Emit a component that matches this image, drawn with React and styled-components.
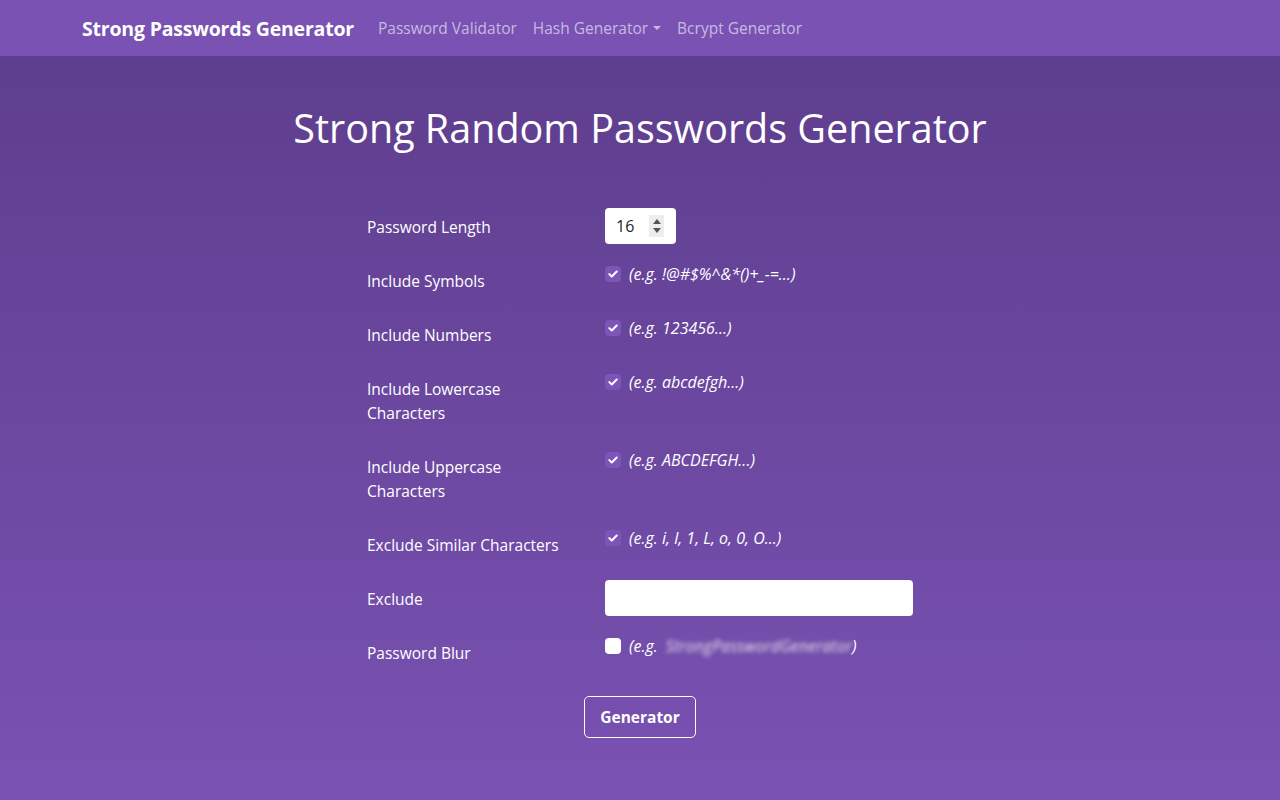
import React from "react";
import styled, { createGlobalStyle } from "styled-components";

const Global = createGlobalStyle`
  html, body { margin: 0; padding: 0; }
  body {
    font-family: "Open Sans", "Noto Sans", sans-serif;
    background: linear-gradient(180deg, #5e3e8e 0px, #5e3e8e 56px, #7a52b3 800px);
    min-height: 800px;
    color: #fff;
  }
`;

const Nav = styled.nav`
  height: 56px;
  background: #7952b3;
  display: flex;
  align-items: center;
`;

const NavInner = styled.div`
  width: 1116px;
  margin: 0 auto;
  display: flex;
  align-items: center;
`;

const Brand = styled.a`
  font-size: 19.5px;
  font-weight: 700;
  color: #fff;
  margin-right: 16px;
  letter-spacing: -0.2px;
`;

const NavLink = styled.a`
  font-size: 15.5px;
  color: rgba(255, 255, 255, 0.6);
  padding: 0 8px;
  display: flex;
  align-items: center;
  gap: 5px;
`;

const Caret = styled.span`
  width: 0;
  height: 0;
  border-left: 4px solid transparent;
  border-right: 4px solid transparent;
  border-top: 4px solid rgba(255, 255, 255, 0.6);
`;

const Main = styled.main`
  padding-top: 48px;
`;

const Title = styled.h1`
  margin: 0 0 56px;
  text-align: center;
  font-size: 39.5px;
  line-height: 48px;
  font-weight: 500;
  color: #fff;
`;

const Form = styled.div`
  width: 546px;
  margin: 0 auto;
`;

const Row = styled.div`
  display: grid;
  grid-template-columns: 214px 1fr;
  column-gap: 24px;
  margin-bottom: 16px;
`;

const Label = styled.label`
  padding: 7px 0;
  font-size: 15.5px;
  line-height: 24px;
  color: #fff;
`;

const NumberBox = styled.div`
  width: 71px;
  height: 36px;
  box-sizing: border-box;
  background: #fff;
  border-radius: 4px;
  display: flex;
  align-items: center;
  padding-left: 11px;
  color: #212529;
  font-size: 16px;
`;

const NumVal = styled.span`
  flex: 1;
`;

const Spinner = styled.div`
  width: 15px;
  height: 22px;
  margin-right: 12px;
  background: #ededed;
  display: flex;
  flex-direction: column;
  align-items: center;
  justify-content: space-around;
  padding: 2px 0;
  box-sizing: border-box;
`;

const Check = styled.div`
  display: flex;
  align-items: flex-start;
  line-height: 24px;
`;

const Box = styled.span`
  width: 16px;
  height: 16px;
  margin-top: 4px;
  margin-right: 8px;
  border-radius: 4px;
  background: ${(p) => (p.$checked ? "#7b55b7" : "#fff")};
  display: flex;
  align-items: center;
  justify-content: center;
  flex-shrink: 0;
`;

const Hint = styled.span`
  font-style: italic;
  font-size: 16px;
  color: #fff;
`;

const Blur = styled.span`
  color: transparent;
  text-shadow: 0 0 4px rgba(255, 255, 255, 0.85);
  margin-left: 8px;
`;

const TextInput = styled.div`
  width: 308px;
  height: 36px;
  background: #fff;
  border-radius: 4px;
`;

const BtnWrap = styled.div`
  display: flex;
  justify-content: center;
  padding-top: 8px;
`;

const Button = styled.button`
  width: 112px;
  height: 42px;
  background: transparent;
  border: 1px solid #fff;
  border-radius: 5px;
  color: #fff;
  font-family: inherit;
  font-weight: 700;
  font-size: 15.5px;
`;

const Tick = () => (
  <svg width="10" height="8" viewBox="0 0 10 8">
    <path d="M1.3 4.1 L3.8 6.5 L8.7 1.5" fill="none" stroke="#fff" strokeWidth="2" strokeLinecap="round" strokeLinejoin="round" />
  </svg>
);

const SpinArrows = () => (
  <>
    <svg width="8" height="5" viewBox="0 0 8 5"><path d="M0 5 L4 0 L8 5Z" fill="#555" /></svg>
    <svg width="8" height="5" viewBox="0 0 8 5"><path d="M0 0 L4 5 L8 0Z" fill="#555" /></svg>
  </>
);

const checks = [
  { label: "Include Symbols", hint: "(e.g. !@#$%^&*()+_-=...)" },
  { label: "Include Numbers", hint: "(e.g. 123456...)" },
  { label: <>Include Lowercase<br />Characters</>, hint: "(e.g. abcdefgh...)" },
  { label: <>Include Uppercase<br />Characters</>, hint: "(e.g. ABCDEFGH...)" },
  { label: "Exclude Similar Characters", hint: "(e.g. i, l, 1, L, o, 0, O...)" },
];

export default function App() {
  return (
    <>
      <Global />
      <Nav>
        <NavInner>
          <Brand>Strong Passwords Generator</Brand>
          <NavLink>Password Validator</NavLink>
          <NavLink>Hash Generator<Caret /></NavLink>
          <NavLink>Bcrypt Generator</NavLink>
        </NavInner>
      </Nav>
      <Main>
        <Title>Strong Random Passwords Generator</Title>
        <Form>
          <Row>
            <Label>Password Length</Label>
            <div>
              <NumberBox>
                <NumVal>16</NumVal>
                <Spinner><SpinArrows /></Spinner>
              </NumberBox>
            </div>
          </Row>
          {checks.map((c, i) => (
            <Row key={i}>
              <Label>{c.label}</Label>
              <Check>
                <Box $checked><Tick /></Box>
                <Hint>{c.hint}</Hint>
              </Check>
            </Row>
          ))}
          <Row>
            <Label>Exclude</Label>
            <div><TextInput /></div>
          </Row>
          <Row>
            <Label>Password Blur</Label>
            <Check>
              <Box />
              <Hint>(e.g.<Blur>StrongPasswordGenerator</Blur>)</Hint>
            </Check>
          </Row>
          <BtnWrap>
            <Button>Generator</Button>
          </BtnWrap>
        </Form>
      </Main>
    </>
  );
}
